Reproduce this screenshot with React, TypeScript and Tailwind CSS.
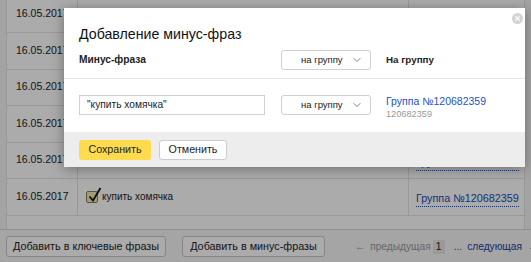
import { ChevronDown } from "lucide-react";

const rows = [0, 1, 2, 3, 4, 5];

function Select() {
  return (
    <div className="flex h-[20px] w-[90px] items-center justify-between rounded-[3px] border border-[#d0d0d0] bg-white pl-[19px] pr-[7px] text-[9.5px] text-[#222]">
      <span>на группу</span>
      <ChevronDown className="h-[12px] w-[12px] text-[#555]" strokeWidth={1.5} />
    </div>
  );
}

export default function App() {
  return (
    <div
      className="relative h-[262px] w-[531px] overflow-hidden bg-white text-[#222]"
      style={{ fontFamily: '"Liberation Sans", Arial, sans-serif' }}
    >
      {/* Таблица под оверлеем */}
      <div className="flex h-[229px]">
        <div className="w-[6px] bg-[#f4f4f4]" />
        <div className="flex w-[519px] flex-col overflow-hidden border-x border-[#e3e3e3]">
          <div className="mt-[-3.5px] flex flex-col">
            {rows.map((i) => (
              <div key={i} className="flex h-[36.5px] border-b border-[#e3e3e3] text-[10.5px]">
                <div className="flex w-[70px] items-center pl-[9px]">16.05.2017</div>
                <div className="flex w-[331px] items-center border-l border-[#e3e3e3] pl-[8px]">
                  {i === 5 && (
                    <>
                      <span className="relative mr-[2px] h-[12px] w-[12px] rounded-[2px] border border-[#8a7f55] bg-[#f5e8b0]">
                        <svg viewBox="0 0 14 16" className="absolute left-[1px] top-[-5px] h-[16px] w-[14px]">
                          <path d="M1.5 9.5 L5 13.5 L12.5 1" fill="none" stroke="#111" strokeWidth="1.8" />
                        </svg>
                      </span>
                      <span className="ml-[2px] text-[10px]">купить хомячка</span>
                    </>
                  )}
                </div>
                <div className="flex flex-1 items-center border-l border-[#e3e3e3] pl-[7px]">
                  {i >= 4 && (
                    <span className="whitespace-nowrap border-b border-dotted border-[#1a4bb5] pt-[4px] text-[10.8px] text-[#1a4bb5]">
                      Группа №120682359
                    </span>
                  )}
                </div>
              </div>
            ))}
          </div>
        </div>
        <div className="w-[6px] bg-[#f4f4f4]" />
      </div>

      {/* Нижняя панель */}
      <div className="flex h-[33px] items-start whitespace-nowrap border-t border-[#d6d6d6] bg-[#f6f6f6] pl-[6px] pt-[6px]">
        <button className="h-[21px] w-[160px] shrink-0 rounded-[3px] border border-[#c8c8c8] bg-white text-[10.8px] text-[#222]">
          Добавить в ключевые фразы
        </button>
        <button className="ml-[16px] h-[21px] w-[143px] shrink-0 rounded-[3px] border border-[#c8c8c8] bg-white text-[10.8px] text-[#222]">
          Добавить в минус-фразы
        </button>
        <div className="ml-[30px] flex h-[21px] shrink-0 items-center text-[10.2px]">
          <span className="text-[#999]">←</span>
          <span className="ml-[5px] text-[#999]">предыдущая</span>
          <span className="ml-[2px] flex h-[14px] w-[12px] items-center justify-center bg-[#e4e4e4] text-[#222]">1</span>
          <span className="ml-[9px] text-[#1a3aa0]">...</span>
          <span className="ml-[5px] text-[#1a3aa0]">следующая</span>
          <span className="ml-[6px] text-[#1a3aa0]">→</span>
        </div>
      </div>

      {/* Оверлей */}
      <div className="absolute inset-0 bg-black/[0.33]" />

      {/* Диалог */}
      <div className="absolute left-[64px] top-[8px] flex h-[159px] w-[461px] flex-col bg-white shadow-[0_2px_12px_rgba(0,0,0,0.35)]">
        <div className="absolute right-[2px] top-[5px] flex h-[11px] w-[11px] items-center justify-center rounded-full bg-[#d4d4d4]">
          <svg viewBox="0 0 10 10" className="h-[7px] w-[7px]">
            <path d="M2 2 L8 8 M8 2 L2 8" stroke="white" strokeWidth="1.8" />
          </svg>
        </div>

        <div className="border-b border-[#e6e6e6] px-[15px] pb-[8px] pt-[16px]">
          <div className="h-[20px] text-[14.2px] leading-[20px] text-[#111]">Добавление минус-фраз</div>
          <div className="mt-[6px] flex h-[20px] items-center">
            <div className="w-[202px] text-[10.2px] font-bold">Минус-фраза</div>
            <Select />
            <div className="ml-[15px] text-[9.8px] font-bold">На группу</div>
          </div>
        </div>

        <div className="flex items-start px-[15px] pt-[16px]">
          <div className="flex h-[20px] w-[186px] items-center border border-[#cfcfcf] pl-[7px] text-[10.2px]">
            "купить хомячка"
          </div>
          <div className="ml-[16px]">
            <Select />
          </div>
          <div className="ml-[15px] flex flex-col whitespace-nowrap leading-[13px]">
            <span className="text-[10.5px] text-[#2354c4]">Группа №120682359</span>
            <span className="text-[9.2px] text-[#999]">120682359</span>
          </div>
        </div>

        <div className="mt-auto flex h-[35px] items-center gap-[8px] bg-[#ededed] px-[15px]">
          <button className="h-[20px] w-[72px] rounded-[3px] bg-[#ffdb4d] text-[10.7px] text-[#222]">Сохранить</button>
          <button className="h-[20px] w-[68px] rounded-[3px] border border-[#ccc] bg-white text-[10.7px] text-[#222]">
            Отменить
          </button>
        </div>
      </div>
    </div>
  );
}
